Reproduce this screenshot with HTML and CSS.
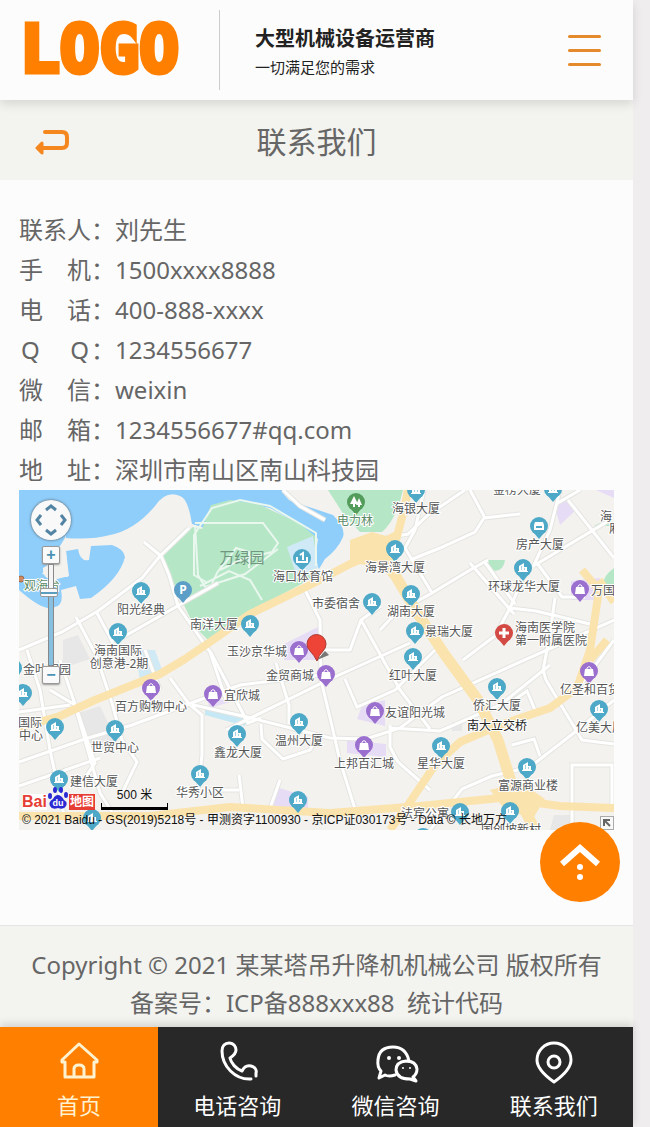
FILE: index.html
```html
<!DOCTYPE html>
<html lang="zh-CN">
<head>
  <meta charset="UTF-8">
  <meta name="viewport" content="width=device-width, initial-scale=1">
  <title>联系我们</title>
  <link rel="stylesheet" href="styles.css">
</head>
<body>
  <div class="page">
    <header class="header">
      <a class="logo" href="#">LOGO</a>
      <div class="slogan">
        <strong>大型机械设备运营商</strong>
        <span>一切满足您的需求</span>
      </div>
      <button class="menu-btn" type="button" aria-label="菜单">
        <i></i><i></i><i></i>
      </button>
    </header>

    <div class="title-bar">
      <a class="back" href="#" aria-label="返回">
        <svg width="36" height="28" viewBox="0 0 36 28">
          <path d="M10 4H27Q32 4 32 9V15Q32 20 27 20H8" fill="none" stroke="#f5871f" stroke-width="4" stroke-linecap="round"/>
          <path d="M2 20L7 15V25Z" fill="#f5871f" stroke="#f5871f" stroke-width="3" stroke-linejoin="round"/>
        </svg>
      </a>
      <h1>联系我们</h1>
    </div>

    <main class="content">
      <dl class="contact">
        <div><dt>联系人</dt><dd>：刘先生</dd></div>
        <div><dt>手 机</dt><dd>：1500xxxx8888</dd></div>
        <div><dt>电 话</dt><dd>：400-888-xxxx</dd></div>
        <div><dt class="latin">Q Q</dt><dd>：1234556677</dd></div>
        <div><dt>微 信</dt><dd>：weixin</dd></div>
        <div><dt>邮 箱</dt><dd>：1234556677#qq.com</dd></div>
        <div><dt>地 址</dt><dd>：深圳市南山区南山科技园</dd></div>
      </dl>

      <div class="map">
        <svg class="map-canvas" viewBox="19 490 595 340" preserveAspectRatio="xMinYMin slice">
          <defs>
            <g id="drop"><circle r="9"/><path d="M-5 7L0 13L5 7Z"/></g>
            <g id="office">
              <use href="#drop" fill="#4da9c7"/>
              <path d="M-5 4V3H-4V-2L1 -5V-1H4V3H5V4Z" fill="#fff"/>
              <path d="M-2 -1H-1M-2 1H-1M1 1H2" stroke="#4da9c7"/>
            </g>
            <g id="shop">
              <use href="#drop" fill="#9a6fce"/>
              <path d="M-4 -2H4L5 5H-5Z" fill="#fff"/>
              <path d="M-2 -1V-3Q0 -6 2 -3V-1" fill="none" stroke="#fff"/>
            </g>
            <g id="roads">
              <path d="M19 650L62 632L98 611L142 578L160 556L189 528M144 542L161 556L169 575L178 606L210 652L226 700"/>
              <path d="M76 617L96 655L112 703L122 740L137 762L123 791M97 613L113 643M125 636L188 600L218 583"/>
              <path d="M27 650L40 690L50 750L64 815M19 712L70 705M19 762L85 739L132 725L240 685L330 674"/>
              <path d="M19 786L100 758M50 690L75 705L100 793L112 812M60 660L95 763L80 785M145 650L160 690"/>
              <path d="M170 678L189 704L247 717L330 738L366 739L400 728L442 697L614 620M189 704L202 715V755L198 790"/>
              <path d="M210 651L248 723L261 718M226 730L328 680L410 643M261 724L262 739L283 759L310 750L318 736M276 663L289 705V724"/>
              <path d="M305 590L320 620L321 680L332 726L340 761L356 812M320 650H350L361 620L381 606M361 620L400 690L430 729"/>
              <path d="M345 679L357 707L395 690L435 650M424 490L415 530L405 548L432 593L470 570L488 560M434 592L397 612L380 630"/>
              <path d="M410 560L440 548L475 532L484 518L520 514M470 490L485 518M470 563L514 614M484 561L515 604"/>
              <path d="M510 608L536 611L590 624M526 571L510 608L495 636L463 660M533 567L550 530L560 490M535 565L610 520"/>
              <path d="M537 563L562 597H585M555 598L549 640L543 670L546 680L582 740L614 744M568 500L614 558M556 504L580 490"/>
              <path d="M430 830L462 789L492 776L530 767L575 732L614 700M572 830V765H612V805M390 725V747L398 762L430 790"/>
              <path d="M390 728L440 731L500 705L550 665M510 703L527 691L535 710M512 745L534 739L540 756M614 640L577 690"/>
              <path d="M280 780L270 808M187 795L210 790H239M239 775L243 808M283 490L300 506L325 520M386 538L408 534L428 515L465 490"/>
            </g>
          </defs>

          <rect x="19" y="490" width="595" height="340" fill="#f3f2ee"/>

          <!-- 水域 -->
          <path fill="#8fcefb" d="M19 490H282Q286 502 300 504L333 515Q346 528 343 537Q338 549 325 559L319 569Q314 560 318 539L297 523L270 508L240 502L216 505L205 528L192 524Q188 498 180 496Q166 490 155 506Q135 530 110 535Q92 540 65 538Q54 556 42 574L68 577L66 551L78 549Q80 562 89 560L91 546L112 545Q124 549 125 557Q120 578 91 598L80 599L76 586L61 590Q64 605 55 607Q45 613 19 590Z"/>
          <path fill="#f3f2ee" d="M66 535Q58 560 43 568Q42 578 53 580L69 576L66 551Z"/>

          <!-- 绿地 -->
          <g fill="#b5e7c7">
            <path d="M162 553L193 527L202 529L211 505L230 500L258 504L299 523L316 537L314 577L250 612L210 642L194 626L174 584Z"/>
            <path d="M328 490H403Q396 520 382 532L360 532L344 515Z"/>
            <path d="M488 560H505Q504 570 495 571L487 567ZM594 526Q603 519 611 526ZM614 568Q600 578 604 590H614Z"/>
          </g>
          <path d="M287 547L313 536L318 568L297 577Z" fill="#cfe9f7"/>
          <path d="M135 650L155 650L162 670L140 680Z" fill="#cfe9f5"/>
          <path d="M205 706L248 716L245 726L205 715Z" fill="#c6e8f5"/>
          <g fill="#e7dcf6">
            <path d="M284 644L318 627V660H284ZM362 706L385 700V726L357 719ZM347 740L386 744V757L347 753ZM276 787L308 797V812H273Z"/>
            <path d="M555 508L567 498L576 510L560 525ZM571 581L600 578V600H571ZM596 490H614V498ZM205 695L230 702L210 708Z"/>
          </g>
          <g fill="#e7e7e7">
            <path d="M63 640L78 635L90 659L63 668ZM78 713L100 706L118 743L92 752ZM452 722H462V731H452ZM554 815H570V830H550Z"/>
          </g>

          <!-- 小路 -->
          <path class="trail" d="M195 525L198 575L205 587M206 582L194 575V535L212 508L240 500L270 506L316 533V566M200 586L229 571L250 580L262 600M195 523H263L278 543L272 552L240 560L220 570M205 587L245 574L278 549M210 590Q216 570 226 562L236 548L249 552V568"/>
          <use href="#roads" class="road-edge"/>
          <use href="#roads" class="road"/>

          <!-- 主干道 -->
          <g fill="none" stroke="#fbe3ae" stroke-width="8" stroke-linejoin="round">
            <path d="M19 728L60 716L95 700L160 674L185 659L210 642L250 614L310 585L350 564L395 544L404 510L408 490"/>
            <path d="M368 545L395 575L418 614L445 655L478 700L498 740L512 785L535 830" stroke-width="11"/>
            <path d="M582 570L599 590L590 650L577 688L550 708L500 725L460 742L435 765L408 805L390 830"/>
            <path d="M607 640L590 660M599 580L614 602M19 816L150 816L230 807L330 813L420 806L500 798L560 806L614 808"/>
          </g>
          <path d="M350 540L372 532L386 536L398 530L394 560L370 566L350 562Z" fill="#fbe3ae"/>
          <path d="M490 790L520 782L545 799L532 820L502 806Z" fill="#fbe3ae"/>

          <!-- 标注点 -->
          <use href="#office" x="141" y="591"/><use href="#office" x="118" y="632"/>
          <use href="#office" x="395" y="549"/><use href="#office" x="411" y="594"/>
          <use href="#office" x="415" y="631"/><use href="#office" x="413" y="657"/>
          <use href="#office" x="372" y="602"/><use href="#office" x="250" y="624"/>
          <use href="#office" x="523" y="568"/><use href="#office" x="497" y="687"/>
          <use href="#office" x="599" y="709"/><use href="#office" x="441" y="746"/>
          <use href="#office" x="527" y="767"/><use href="#office" x="510" y="811"/>
          <use href="#office" x="460" y="812"/><use href="#office" x="299" y="722"/>
          <use href="#office" x="237" y="734"/><use href="#office" x="298" y="800"/>
          <use href="#office" x="200" y="774"/><use href="#office" x="115" y="729"/>
          <use href="#office" x="55" y="727"/><use href="#office" x="59" y="779"/>
          <use href="#office" x="23" y="693"/><use href="#office" x="13" y="668"/>
          <use href="#office" x="416" y="490"/><use href="#office" x="553" y="489"/>
          <use href="#office" x="92" y="818"/><use href="#office" x="423" y="837"/>
          <use href="#shop" x="151" y="688"/><use href="#shop" x="213" y="694"/>
          <use href="#shop" x="299" y="650"/><use href="#shop" x="326" y="674"/>
          <use href="#shop" x="375" y="711"/><use href="#shop" x="364" y="745"/>
          <use href="#shop" x="580" y="589"/><use href="#shop" x="589" y="671"/>
          <g transform="translate(302 558)">
            <use href="#drop" fill="#4da9c7"/>
            <path d="M-5 -1V4H5V-1M1 2V-5L-2 -3" fill="none" stroke="#fff" stroke-width="2"/>
          </g>
          <g transform="translate(539 526)">
            <use href="#drop" fill="#4da9c7"/>
            <path d="M-4 -4H4L5 -1V4H-5V-1Z" fill="#fff"/><path d="M-3 1H3" stroke="#4da9c7" stroke-width="2"/>
          </g>
          <g transform="translate(183 590)">
            <use href="#drop" fill="#5b9fc8"/>
            <text y="4" class="parking">P</text>
          </g>
          <g transform="translate(356 502)">
            <use href="#drop" fill="#539c5c"/>
            <path d="M-2 -6L-6 2H2ZM3 -4L0 3H6ZM-3 2H-1V5H-3ZM2 3H4V5H2Z" fill="#fff"/>
          </g>
          <g transform="translate(504 633)">
            <use href="#drop" fill="#d34a45"/>
            <path d="M-5 0H5M0 -5V5" stroke="#fff" stroke-width="3"/>
          </g>
          <circle cx="21" cy="579" r="3" fill="#cf8961" stroke="#9f6645"/>

          <!-- 地名 -->
          <g class="places">
            <text x="141" y="614">阳光经典</text>
            <text x="118" y="655">海南国际</text>
            <text x="119" y="668">创意港-2期</text>
            <text x="303" y="581">海口体育馆</text>
            <text x="355" y="525" class="green">电力林</text>
            <text x="242" y="563" class="park">万绿园</text>
            <text x="42" y="590" class="green">观海台</text>
            <text x="336" y="608">市委宿舍</text>
            <text x="416" y="513">海银大厦</text>
            <text x="395" y="572">海景湾大厦</text>
            <text x="411" y="616">湖南大厦</text>
            <text x="449" y="636">景瑞大厦</text>
            <text x="413" y="680">红叶大厦</text>
            <text x="257" y="656">玉沙京华城</text>
            <text x="290" y="680">金贸商城</text>
            <text x="242" y="700">宜欣城</text>
            <text x="214" y="629">南洋大厦</text>
            <text x="151" y="711">百方购物中心</text>
            <text x="115" y="752">世贸中心</text>
            <text x="30" y="727">国际</text>
            <text x="31" y="740">中心</text>
            <text x="47" y="674">金叶家园</text>
            <text x="94" y="786">建信大厦</text>
            <text x="200" y="797">华秀小区</text>
            <text x="238" y="757">鑫龙大厦</text>
            <text x="299" y="745">温州大厦</text>
            <text x="364" y="768">上邦百汇城</text>
            <text x="415" y="717">友谊阳光城</text>
            <text x="441" y="768">星华大厦</text>
            <text x="497" y="730" class="dark">南大立交桥</text>
            <text x="497" y="710">侨汇大厦</text>
            <text x="528" y="790">富源商业楼</text>
            <text x="590" y="694">亿圣和百货</text>
            <text x="600" y="732">亿美大厦</text>
            <text x="603" y="595">万国</text>
            <text x="606" y="521">海</text>
            <text x="615" y="533">厢</text>
            <text x="545" y="632">海南医学院</text>
            <text x="551" y="645">第一附属医院</text>
            <text x="524" y="591">环球龙华大厦</text>
            <text x="540" y="549">房产大厦</text>
            <text x="517" y="494">金榜大厦</text>
            <text x="425" y="818">法宾公寓</text>
            <text x="511" y="834">国创坡新村</text>
          </g>

          <!-- 当前位置 -->
          <path d="M317 660L325 651L329 655Z" fill="#777"/>
          <path d="M317 661Q314 655 310 651Q307 648 307 644A9 9 0 0 1 326 644Q326 648 323 651Q319 655 317 661Z" fill="#ee4437" stroke="#a93931"/>
        </svg>

        <div class="pan">
          <svg width="40" height="40" viewBox="0 0 40 40" fill="none" stroke="#5484a3" stroke-width="3">
            <path d="M15 10L20 6L25 10M15 30L20 34L25 30M10 15L6 20L10 25M30 15L34 20L30 25"/>
          </svg>
        </div>
        <div class="zoom">
          <button type="button" aria-label="放大">+</button>
          <input type="range" min="3" max="19" value="15" aria-label="缩放级别">
          <button type="button" aria-label="缩小">−</button>
        </div>
        <div class="brand">
          <span class="brand-bai">Bai</span>
          <svg width="22" height="24" viewBox="0 0 22 24">
            <g fill="#2b2bd5">
              <ellipse cx="3" cy="10" rx="2" ry="3"/><ellipse cx="8" cy="4" rx="2" ry="3"/>
              <ellipse cx="14" cy="4" rx="2" ry="3"/><ellipse cx="19" cy="9" rx="2" ry="3"/>
              <path d="M11 9Q14 9 17 14Q21 16 19 20Q17 24 11 22Q5 24 3 20Q1 16 6 13Q8 9 11 9Z"/>
            </g>
            <text x="11" y="20" class="brand-du">du</text>
          </svg>
          <span class="brand-map">地图</span>
        </div>
        <div class="scale">500 米</div>
        <div class="copy">© 2021 Baidu - GS(2019)5218号 - 甲测资字1100930 - 京ICP证030173号 - Data © 长地万方</div>
        <button class="overview" type="button" aria-label="鹰眼">
          <svg width="12" height="12" viewBox="0 0 12 12" fill="none" stroke="#666" stroke-width="2"><path d="M3 9V3H9M3 3L9 9"/></svg>
        </button>
      </div>
    </main>

    <footer class="footer">
      <p>Copyright © 2021 某某塔吊升降机机械公司 版权所有</p>
      <p>备案号：ICP备888xxx88&nbsp; 统计代码</p>
    </footer>

    <nav class="tabbar">
      <a class="active" href="#">
        <svg width="40" height="44" viewBox="0 0 40 44">
          <path d="M20 5L3 21V23H6V38H35V23H38V21ZM15 38V30Q15 26 20 26Q25 26 25 30V38"/>
        </svg>
        <span>首页</span>
      </a>
      <a href="#">
        <svg width="40" height="44" viewBox="0 0 40 44">
          <path d="M34 40C18 41 5 27 5 12C5 7 8 4 12 4C17 4 19 8 19 11C19 15 16 17 13 19C14 24 19 30 25 32C27 28 30 26 34 27C38 28 40 31 39 34V37"/>
        </svg>
        <span>电话咨询</span>
      </a>
      <a href="#">
        <svg width="44" height="44" viewBox="0 0 44 44">
          <path d="M21 36Q15 38 11 36L5 39L7 32Q3 28 4 21Q5 8 19 8Q32 8 35 22"/>
          <path d="M39 38Q43 35 43 30Q42 22 32 22Q22 23 22 31Q23 40 36 40L42 42Z"/>
          <g class="eyes"><circle cx="15" cy="19" r="2"/><circle cx="25" cy="19" r="2"/><circle cx="29" cy="29" r="1"/><circle cx="36" cy="29" r="1"/></g>
        </svg>
        <span>微信咨询</span>
      </a>
      <a href="#">
        <svg width="40" height="44" viewBox="0 0 40 44">
          <path d="M20 43Q3 31 3 21A17 17 0 0 1 37 21Q37 31 20 43Z"/>
          <circle cx="20" cy="23" r="6"/>
        </svg>
        <span>联系我们</span>
      </a>
    </nav>
  </div>

  <button class="to-top" type="button" aria-label="返回顶部">
    <svg width="40" height="40" viewBox="0 0 40 40">
      <path d="M2 22L20 6L38 22" fill="none" stroke="#fff" stroke-width="6"/>
      <circle cx="20" cy="25" r="3" fill="#fff"/><circle cx="20" cy="35" r="3" fill="#fff"/>
    </svg>
  </button>
</body>
</html>
```
FILE: styles.css
```css
* {
  box-sizing: border-box;
  margin: 0;
  padding: 0;
}
body {
  background: #efeded;
  color: #666;
  font-family: "Noto Sans", "Noto Sans CJK SC", sans-serif;
}
a {
  color: inherit;
  text-decoration: none;
}
button {
  border: none;
  background: none;
  cursor: pointer;
}
svg { display: block; }
.page {
  margin-right: 17px;
  background: #fcfcfc;
}

/* 顶部 */
.header {
  position: relative;
  display: flex;
  align-items: center;
  height: 100px;
  padding: 0 32px 0 20px;
  background: #fcfcfc;
  box-shadow: 0 4px 10px rgba(0, 0, 0, 0.12);
}
.logo {
  width: 199px;
  color: #ff8000;
  font: bold 66px/80px "DejaVu Sans Mono", monospace;
  -webkit-text-stroke: 5px #ff8000;
}
.slogan {
  display: flex;
  flex: 1;
  flex-direction: column;
  justify-content: center;
  height: 80px;
  padding: 4px 0 0 35px;
  border-left: 1px solid #ccc;
  color: #222;
}
.slogan strong {
  font-size: 20px;
  line-height: 30px;
}
.slogan span {
  font-size: 15px;
  line-height: 26px;
}
.menu-btn {
  display: flex;
  flex-direction: column;
  gap: 11px;
}
.menu-btn i {
  width: 33px;
  height: 3px;
  border-radius: 2px;
  background: #e48a2c;
}

.title-bar {
  display: grid;
  grid-template-columns: 36px 1fr 36px;
  align-items: center;
  height: 80px;
  padding: 4px 35px 0;
  background: #f3f3ef;
}
.title-bar h1 {
  font-size: 30px;
  font-weight: normal;
  line-height: 40px;
  text-align: center;
}

/* 联系方式 */
.content { padding: 30px 19px 95px; }
.contact div {
  display: flex;
  font-size: 24px;
  line-height: 40px;
}
.contact dt {
  width: 72px;
  text-align-last: justify;
}
.contact .latin { padding: 0 2px; }

/* 地图 */
.map {
  position: relative;
  height: 340px;
  overflow: hidden;
}
.map-canvas {
  width: 100%;
  height: 100%;
}
.road-edge {
  fill: none;
  stroke: #e4e4e1;
  stroke-width: 5px;
}
.road {
  fill: none;
  stroke: #fff;
  stroke-width: 3px;
}
.trail {
  fill: none;
  stroke: #e9f7ee;
  stroke-width: 2px;
}
.places text {
  fill: #555;
  stroke: #fff;
  stroke-width: 2px;
  paint-order: stroke;
  font-size: 12px;
  text-anchor: middle;
}
.places .green { fill: #5d8b68; }
.places .dark { fill: #222; }
.places .park {
  fill: #719780;
  stroke: none;
  font-size: 15px;
}
.parking {
  fill: #fff;
  font-size: 12px;
  font-weight: bold;
  text-anchor: middle;
}
.pan {
  position: absolute;
  left: 12px;
  top: 10px;
  border-radius: 50%;
  background: #f9f9f9;
  box-shadow: 0 0 3px #555;
}
.zoom {
  position: absolute;
  left: 23px;
  top: 56px;
  display: flex;
  flex-direction: column;
  align-items: center;
}
.zoom button {
  width: 18px;
  height: 18px;
  border: 1px solid #999;
  border-radius: 2px;
  background: #fafafa;
  box-shadow: 0 1px 2px #999;
  color: #4a92b5;
  font: bold 16px/14px "Liberation Sans", sans-serif;
}
.zoom input {
  appearance: none;
  width: 6px;
  height: 102px;
  border: 1px solid #888;
  background: linear-gradient(#f5f5f5 30%, #86bfdf 30%);
  writing-mode: vertical-lr;
  direction: rtl;
}
.zoom input::-webkit-slider-thumb {
  appearance: none;
  width: 18px;
  height: 9px;
  margin-left: -4px;
  border: 1px solid #999;
  border-radius: 2px;
  background: linear-gradient(#fafafa 3px, #5a9dbe 3px, #5a9dbe 5px, #fafafa 5px);
}
.brand {
  position: absolute;
  left: 3px;
  bottom: 20px;
  display: flex;
  align-items: flex-end;
}
.brand span {
  height: 16px;
  font: bold 16px/16px "Liberation Sans", "Noto Sans CJK SC", sans-serif;
}
.brand-bai {
  background: #fff;
  color: #e63d35;
}
.brand .brand-map {
  padding: 0 1px;
  background: #e63d35;
  color: #fff;
  font-size: 12px;
}
.brand-du {
  fill: #fff;
  font: bold 9px "Liberation Sans", sans-serif;
  text-anchor: middle;
}
.scale {
  position: absolute;
  left: 82px;
  bottom: 20px;
  width: 67px;
  height: 21px;
  border-bottom: 3px solid #000;
  color: #111;
  font: 12px/12px "Liberation Sans", "Noto Sans CJK SC", sans-serif;
  text-align: center;
}
.scale::after {
  position: absolute;
  left: 0;
  right: 0;
  bottom: 0;
  height: 4px;
  border: solid #000;
  border-width: 0 1px;
  content: "";
}
.copy {
  position: absolute;
  left: 3px;
  bottom: 1px;
  color: #111;
  font: 12px/18px "Liberation Sans", "Noto Sans CJK SC", sans-serif;
  white-space: nowrap;
}
.overview {
  position: absolute;
  right: 0;
  bottom: 0;
  border: 1px solid #aaa;
  background: #f8f8f8;
}

/* 底部 */
.footer {
  height: 102px;
  padding-top: 20px;
  border-top: 1px solid #e5e5e5;
  background: #f3f3ef;
  font-size: 24px;
  line-height: 38px;
  text-align: center;
}
.tabbar {
  position: relative;
  display: flex;
  height: 100px;
  background: #282828;
  box-shadow: 0 -3px 8px rgba(0, 0, 0, 0.14);
  color: #fff;
}
.tabbar a {
  display: flex;
  flex: 1;
  flex-direction: column;
  align-items: center;
  padding-top: 12px;
  font-size: 22px;
  line-height: 32px;
}
.tabbar a span { padding-top: 6px; }
.tabbar .active {
  background: #ff8000;
  color: #fff2d0;
}
.tabbar svg {
  overflow: visible;
  fill: none;
  stroke: currentColor;
  stroke-width: 3px;
  stroke-linecap: round;
  stroke-linejoin: round;
}
.tabbar .eyes {
  fill: currentColor;
  stroke: none;
}
.to-top {
  position: fixed;
  right: 30px;
  bottom: 225px;
  display: flex;
  align-items: center;
  justify-content: center;
  width: 80px;
  height: 80px;
  border-radius: 50%;
  background: #ff8000;
}
```
